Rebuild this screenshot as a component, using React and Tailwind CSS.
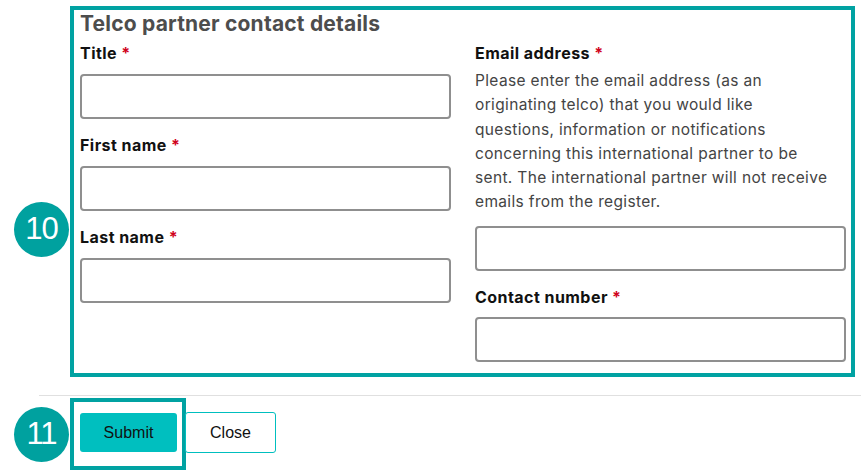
import React from 'react';

const TEAL = 'border-[#00a2a2]';

const Label = ({ children }) => (
  <div className="h-[22px] leading-[22px] text-[16px] font-bold tracking-[0.45px] text-[#111]">
    {children} <span className="text-[#d0021b]">*</span>
  </div>
);

const Input = ({ className = '' }) => (
  <input
    type="text"
    className={`block w-full h-[45px] rounded-[4px] border-2 border-[#8f8f8f] bg-white outline-none ${className}`}
  />
);

const Badge = ({ n, className }) => (
  <div
    className={`absolute w-[55px] h-[55px] rounded-full bg-[#00a19f] text-white flex items-center justify-center text-[31px] tracking-[-1px] ${className}`}
    style={{ fontFamily: '"Liberation Sans", Arial, sans-serif' }}
  >
    {n}
  </div>
);

export default function App() {
  return (
    <div
      className="relative w-[861px] h-[470px] overflow-hidden bg-white"
      style={{ fontFamily: 'Inter, "Open Sans", sans-serif' }}
    >
      {/* contact details panel */}
      <div className={`ml-[70px] mt-[6px] w-[785px] h-[371px] border-[4px] ${TEAL} pl-[6px] pr-[5px]`}>
        <h2 className="h-[28px] leading-[28px] text-[21px] font-bold tracking-[0.2px] text-[#4d4d4d] mb-[4px]">
          Telco partner contact details
        </h2>
        <div className="grid grid-cols-2 gap-x-[24px]">
          <div className="flex flex-col">
            <Label>Title</Label>
            <Input className="mt-[10px]" />
            <div className="mt-[15px]"><Label>First name</Label></div>
            <Input className="mt-[10px]" />
            <div className="mt-[15px]"><Label>Last name</Label></div>
            <Input className="mt-[10px]" />
          </div>
          <div className="flex flex-col">
            <Label>Email address</Label>
            <p className="mt-[5px] text-[15.5px] leading-[24.3px] tracking-[0.35px] text-[#444] whitespace-nowrap">
              Please enter the email address (as an<br />
              originating telco) that you would like<br />
              questions, information or notifications<br />
              concerning this international partner to be<br />
              sent. The international partner will not receive<br />
              emails from the register.
            </p>
            <Input className="mt-[11px]" />
            <div className="mt-[15px]"><Label>Contact number</Label></div>
            <Input className="mt-[9px]" />
          </div>
        </div>
      </div>

      {/* footer */}
      <div className="ml-[39px] mt-[18px] border-t border-[#e0e0e0]">
        <div className={`ml-[31px] mt-[2px] w-[116px] h-[72px] border-[4px] ${TEAL} pl-[6px] pt-[11px]`}>
          <div className="flex gap-[8px]" style={{ fontFamily: '"Liberation Sans", Arial, sans-serif' }}>
            <button className="shrink-0 w-[97px] h-[39px] rounded-[3px] bg-[#00bfbf] text-[16px] text-[#111]">
              Submit
            </button>
            <button className="shrink-0 w-[91px] h-[41px] -mt-[1px] rounded-[3px] border border-[#00bfbf] bg-white text-[16px] text-[#111]">
              Close
            </button>
          </div>
        </div>
      </div>

      <Badge n="10" className="left-[14px] top-[202px]" />
      <Badge n="11" className="left-[14px] top-[407px]" />
    </div>
  );
}
